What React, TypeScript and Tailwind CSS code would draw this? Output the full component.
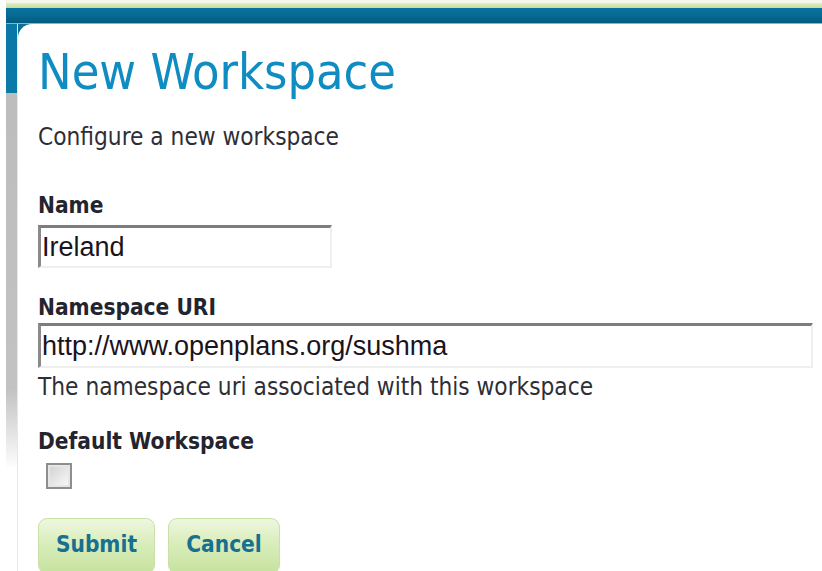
import React from "react";

const ui = "font-['DejaVu_Sans_Condensed','DejaVu_Sans',sans-serif] font-stretch-condensed";

function Label({ children, className = "" }: { children: React.ReactNode; className?: string }) {
  return (
    <div className={`${ui} text-[22.5px] leading-[22px] font-bold text-[#24242e] ${className}`}>{children}</div>
  );
}

function TextField({ value, width, height, className = "" }: { value: string; width: string; height: string; className?: string }) {
  return (
    <input
      readOnly
      defaultValue={value}
      className={`${width} ${height} block border-t-[3px] border-l-[3px] border-r-2 border-b-2 border-t-[#7d7d7d] border-l-[#8a8a8a] border-r-[#efefef] border-b-[#efefef] bg-white pl-[1px] font-['Liberation_Sans',Arial,sans-serif] text-[27px] text-[#1a1320] outline-none ${className}`}
    />
  );
}

function Button({ children, width }: { children: React.ReactNode; width: string }) {
  return (
    <button
      className={`${width} h-[56px] shrink-0 rounded-[9px] border border-[#c9e1a8] bg-[linear-gradient(to_bottom,#eef7de_0%,#d9edbb_45%,#c6e29e_100%)] pb-[2px] ${ui} text-[22.5px] font-bold text-[#17708f]`}
    >
      {children}
    </button>
  );
}

export default function App() {
  return (
    <div className="w-[822px] h-[571px] overflow-hidden bg-white pl-[6px]">
      {/* header stripes */}
      <div className="h-[3px] bg-[#f2f7ea]" />
      <div className="h-[5px] bg-[linear-gradient(to_bottom,#e0eec8,#c3dc9a)]" />
      <div className="h-[15px] bg-[linear-gradient(to_bottom,#0872a0,#066890_60%,#045b7c)]" />
      <div className="h-px bg-[#8fb0bf]" />
      <div className="flex bg-[linear-gradient(to_bottom,#0872a0_0px,#06658d_20px,#ffffff_20px)]">
        {/* left rail */}
        <div className="w-[11px] shrink-0 bg-[linear-gradient(to_bottom,#0a78a6_0px,#0a7aa8_69px,#bdbdbd_69px,#c2c2c2_365px,#ffffff_445px)]" />
        <div className="w-px shrink-0 bg-[#e4e8ea]" />
        {/* content panel */}
        <div className="flex-1 bg-white rounded-tl-[14px] pl-[20px] pb-[40px]">
          <h1 className={`${ui} mt-[23px] text-[50px] leading-[50px] font-normal text-[#0f8cc2]`}>New Workspace</h1>
          <p className={`${ui} mt-[28px] text-[24.2px] leading-[24px] text-[#2e2e36]`}>Configure a new workspace</p>

          <Label className="mt-[45px]">Name</Label>
          <TextField value="Ireland" width="w-[294px]" height="h-[43px]" className="mt-[9px]" />

          <Label className="mt-[28px]">Namespace URI</Label>
          <TextField value="http://www.openplans.org/sushma" width="w-[775px]" height="h-[45px]" className="mt-[5px]" />
          <p className={`${ui} mt-[7px] text-[24.2px] leading-[24px] text-[#2e2e36]`}>
            The namespace uri associated with this workspace
          </p>

          <Label className="mt-[31px]">Default Workspace</Label>
          <div className="ml-[8px] mt-[11px] w-[26px] h-[26px] border-2 border-[#8e8e8e] p-[2px] bg-[#e6e6e6]">
            <div className="w-full h-full bg-[linear-gradient(135deg,#d4d4d4,#f7f7f7)]" />
          </div>

          <div className="mt-[29px] flex gap-[13px]">
            <Button width="w-[117px]">Submit</Button>
            <Button width="w-[112px]">Cancel</Button>
          </div>
        </div>
      </div>
    </div>
  );
}
